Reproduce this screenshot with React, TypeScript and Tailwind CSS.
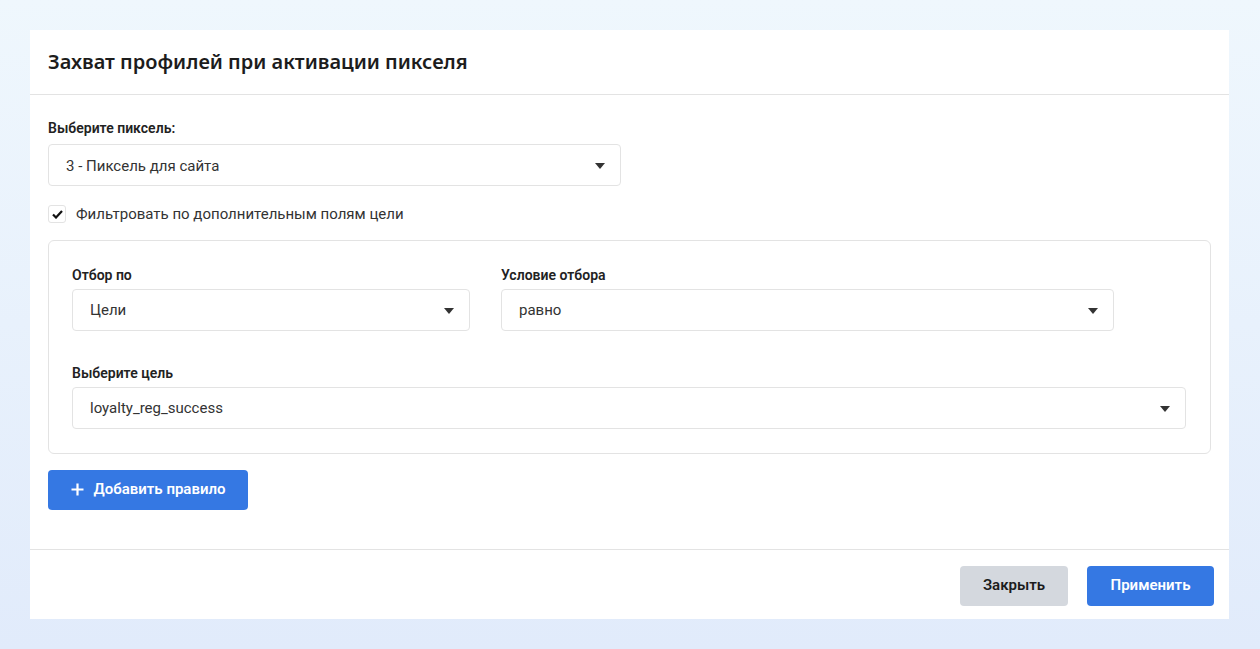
import React from "react";

const Caret = () => (
  <svg width="10" height="6" viewBox="0 0 10 6" className="shrink-0">
    <path d="M0 0 L10 0 L5 6 Z" fill="#333" />
  </svg>
);

const Select = ({ value, className }: { value: string; className: string }) => (
  <div
    className={`flex h-[42px] items-center justify-between rounded-[4px] border border-[#e3e3e3] bg-white pl-[17px] pr-[15px] pt-[2px] text-[15px] text-[#333] ${className}`}
  >
    <span>{value}</span>
    <Caret />
  </div>
);

const Label = ({ children, mb = "mb-[7px]" }: { children: React.ReactNode; mb?: string }) => (
  <div className={`${mb} text-[14px] font-semibold leading-[18px] text-[#222]`}>{children}</div>
);

export default function App() {
  return (
    <div
      className="min-h-[649px] w-full bg-gradient-to-b from-[#eff7fd] to-[#e1ebfb] px-[30px] pt-[30px] pb-[31px]"
      style={{ fontFamily: 'Roboto, "Liberation Sans", sans-serif' }}
    >
      <div className="w-[1199px] bg-white">
        <div className="flex h-[65px] items-center border-b border-[#e3e3e3] px-[18px]">
          <h1
            className="text-[20px] font-semibold text-[#1c1c1c]"
            style={{ fontFamily: '"Noto Sans", sans-serif' }}
          >
            Захват профилей при активации пикселя
          </h1>
        </div>
        <div className="px-[18px] pt-[24px] pb-[39px]">
          <Label>Выберите пиксель:</Label>
          <Select value="3 - Пиксель для сайта" className="w-[573px]" />
          <div className="mt-[17px] flex items-center">
            <div className="flex h-[18px] w-[18px] items-center justify-center rounded-[3px] border border-[#e3e3e3]">
              <svg width="11" height="9" viewBox="0 0 11 9">
                <path d="M1 4.5 L4 7.5 L10 1" stroke="#111" strokeWidth="2.2" fill="none" />
              </svg>
            </div>
            <span className="ml-[10px] text-[15px] text-[#333]">Фильтровать по дополнительным полям цели</span>
          </div>
          <div className="mt-[14px] w-[1163px] rounded-[6px] border border-[#e3e3e3] px-[23px] pt-[25px] pb-[24px]">
            <div className="flex gap-[31px]">
              <div>
                <Label mb="mb-[5px]">Отбор по</Label>
                <Select value="Цели" className="w-[398px]" />
              </div>
              <div>
                <Label mb="mb-[5px]">Условие отбора</Label>
                <Select value="равно" className="w-[613px]" />
              </div>
            </div>
            <div className="mt-[33px]">
              <Label mb="mb-[5px]">Выберите цель</Label>
              <Select value="loyalty_reg_success" className="w-[1114px]" />
            </div>
          </div>
          <button className="mt-[16px] flex h-[40px] w-[200px] items-center justify-center gap-[10px] rounded-[4px] bg-[#3578e3] text-[15px] font-semibold text-white">
            <svg width="13" height="13" viewBox="0 0 13 13">
              <path d="M6.5 0.5 V12.5 M0.5 6.5 H12.5" stroke="white" strokeWidth="2.2" />
            </svg>
            Добавить правило
          </button>
        </div>
        <div className="flex justify-end gap-[19px] border-t border-[#e3e3e3] pl-[16px] pr-[15px] pt-[16px] pb-[13px]">
          <button className="h-[40px] w-[108px] rounded-[4px] bg-[#d4d8de] text-[15px] font-semibold text-[#1c1c1c]">
            Закрыть
          </button>
          <button className="h-[40px] w-[127px] rounded-[4px] bg-[#3578e3] text-[15px] font-semibold text-white">
            Применить
          </button>
        </div>
      </div>
    </div>
  );
}
